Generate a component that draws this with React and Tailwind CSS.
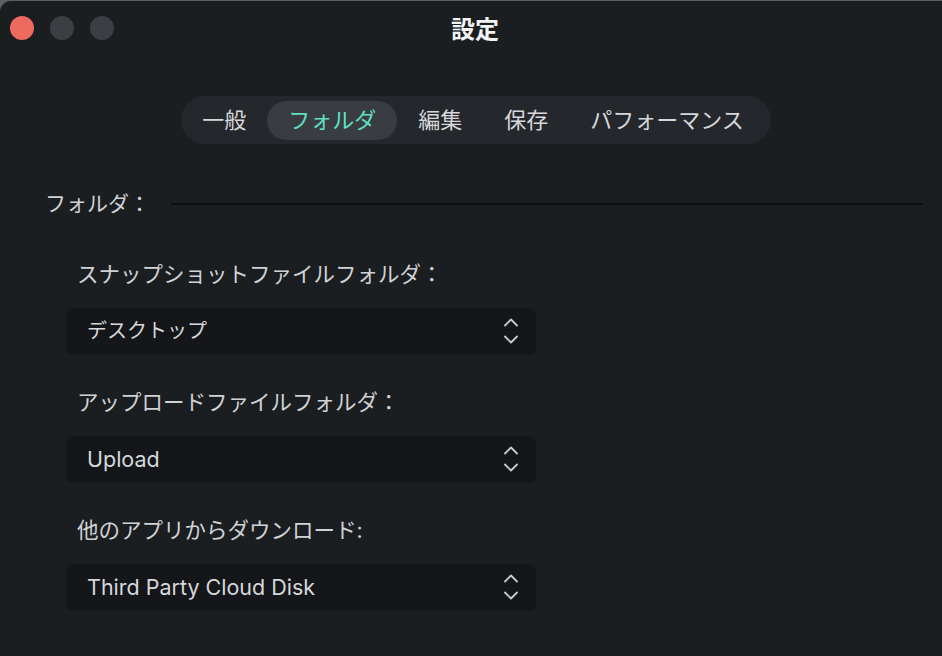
import { useState } from "react";

const tabs = ["一般", "フォルダ", "編集", "保存", "パフォーマンス"];

const jp = "font-['Inter','Noto_Sans_CJK_JP',sans-serif]";

function Chevrons() {
  return (
    <svg width="16" height="30" viewBox="0 0 16 30" fill="none" stroke="#c9cbce" strokeWidth="1.8" strokeLinecap="round" strokeLinejoin="round">
      <path d="M2 9.5 L8 3.5 L14 9.5" />
      <path d="M2 20.5 L8 26.5 L14 20.5" />
    </svg>
  );
}

function Select({ value, latin }) {
  return (
    <div className="flex h-[47px] w-[470px] items-center justify-between rounded-[7px] bg-[#141619] pl-[21px] pr-[17px]">
      <span className={`${latin ? "text-[21.5px]" : "text-[20px]"} text-[#d6d8db]`}>{value}</span>
      <Chevrons />
    </div>
  );
}

function Field({ label, value, latin }) {
  return (
    <div className="flex flex-col">
      <div className="mb-[19px] pl-[11px] text-[21.5px] leading-[30px] text-[#d0d2d5]">{label}</div>
      <Select value={value} latin={latin} />
    </div>
  );
}

export default function App() {
  const [active, setActive] = useState(1);

  return (
    <div className={`h-[656px] w-[942px] overflow-hidden bg-[#5d6064] pt-[1px] ${jp}`}>
      <div className="h-full w-full rounded-tl-[11px] bg-[#1b1e21]">
        {/* title bar */}
        <div className="relative flex h-[58px] items-center justify-center">
          <div className="absolute left-[10px] top-[15px] flex gap-[16px]">
            <span className="h-[24px] w-[24px] rounded-full bg-[#ec6a5e]" />
            <span className="h-[24px] w-[24px] rounded-full bg-[#3b3e42]" />
            <span className="h-[24px] w-[24px] rounded-full bg-[#3b3e42]" />
          </div>
          <div className="ml-[8px] text-[24px] font-bold text-[#f2f3f4]">設定</div>
        </div>

        {/* tabs */}
        <div className="mt-[37px] flex justify-center">
          <div className="ml-[10px] flex h-[48px] items-center rounded-full bg-[#24272b] pr-[6px]">
            {tabs.map((t, i) => (
              <button
                key={t}
                onClick={() => setActive(i)}
                className={`h-[39px] rounded-full px-[21px] text-[22px] ${
                  i === active ? "bg-[#393c41] text-[#5fe0c3]" : "text-[#d5d7da]"
                }`}
              >
                {t}
              </button>
            ))}
          </div>
        </div>

        {/* section header */}
        <div className="mt-[44px] flex items-center pl-[45px] pr-[19px]">
          <span className="text-[21px] text-[#d0d2d5]">フォルダ：</span>
          <div className="ml-[21px] h-[2px] flex-1 bg-[#0b0d0f]" />
        </div>

        {/* fields */}
        <div className="mt-[39px] flex flex-col gap-[32px] pl-[66px]">
          <Field label="スナップショットファイルフォルダ：" value="デスクトップ" />
          <Field label="アップロードファイルフォルダ：" value="Upload" latin />
          <Field label="他のアプリからダウンロード:" value="Third Party Cloud Disk" latin />
        </div>
      </div>
    </div>
  );
}
